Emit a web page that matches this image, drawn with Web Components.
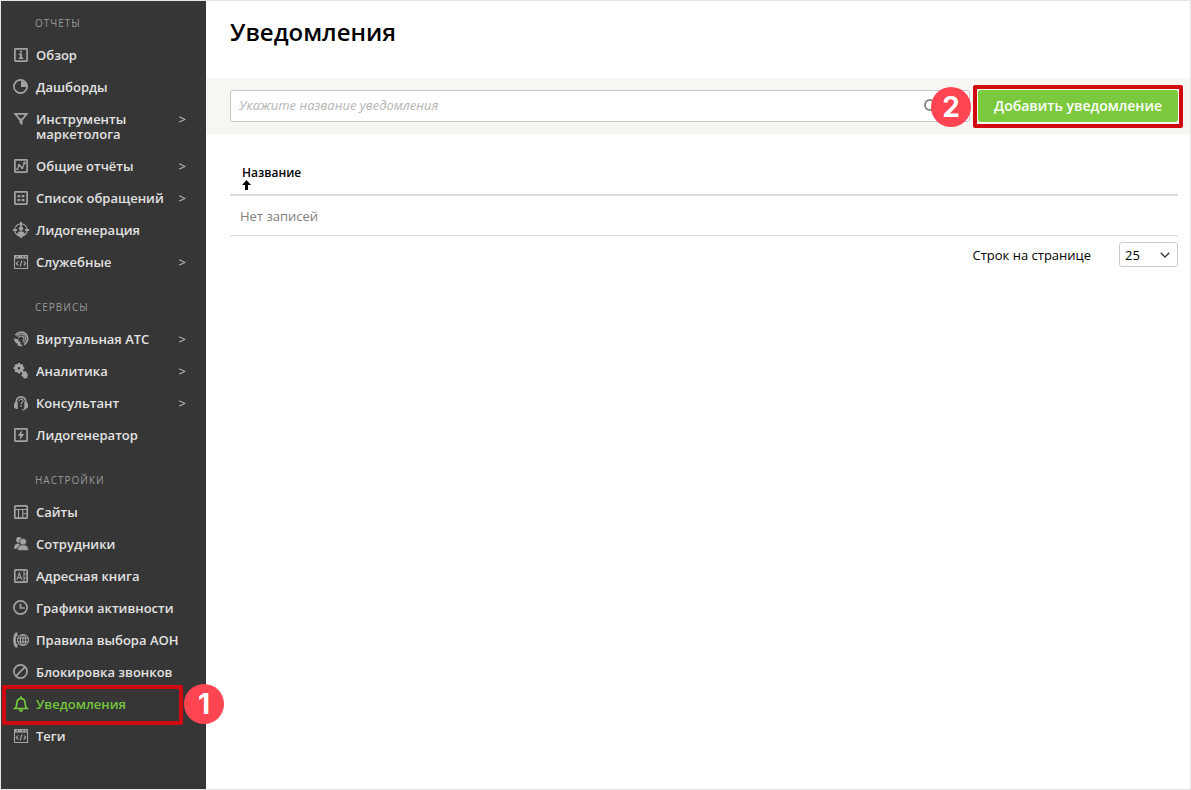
<!DOCTYPE html>
<html lang="ru">
<head>
<meta charset="utf-8">
<meta name="viewport" content="width=device-width, initial-scale=1">
<title>Уведомления</title>
<style>
  html, body { margin: 0; }
  body { font: 13px/15px "Open Sans", "Noto Sans", sans-serif; color: #000; background: #fff; }
</style>
</head>
<body>
<app-shell>
  <side-nav slot="nav">
    <nav-group heading="Отчеты">
      <nav-item icon="info">Обзор</nav-item>
      <nav-item icon="pie">Дашборды</nav-item>
      <nav-item icon="funnel" expandable>Инструменты маркетолога</nav-item>
      <nav-item icon="chart" expandable>Общие отчёты</nav-item>
      <nav-item icon="list" expandable>Список обращений</nav-item>
      <nav-item icon="target">Лидогенерация</nav-item>
      <nav-item icon="code" expandable>Служебные</nav-item>
    </nav-group>
    <nav-group heading="Сервисы">
      <nav-item icon="pbx" expandable>Виртуальная АТС</nav-item>
      <nav-item icon="gears" expandable>Аналитика</nav-item>
      <nav-item icon="headset" expandable>Консультант</nav-item>
      <nav-item icon="bolt">Лидогенератор</nav-item>
    </nav-group>
    <nav-group heading="Настройки">
      <nav-item icon="layout">Сайты</nav-item>
      <nav-item icon="people">Сотрудники</nav-item>
      <nav-item icon="book">Адресная книга</nav-item>
      <nav-item icon="clock">Графики активности</nav-item>
      <nav-item icon="phone">Правила выбора АОН</nav-item>
      <nav-item icon="block">Блокировка звонков</nav-item>
      <nav-item icon="bell" current step="1">Уведомления</nav-item>
      <nav-item icon="code">Теги</nav-item>
    </nav-group>
  </side-nav>
  <page-title>Уведомления</page-title>
  <filter-bar placeholder="Укажите название уведомления">
    <add-button slot="action" step="2">Добавить уведомление</add-button>
  </filter-bar>
  <records-table column="Название">Нет записей</records-table>
  <table-pager>Строк на странице</table-pager>
</app-shell>

<script>
const ICONS = {
  info: '<rect x="1.900" y="1.900" width="12.200" height="12.200" rx=".6" class="s"/><path d="M7 3.800h2v1.700H7zM5.800 6.600H9v4h1.300V12H5.700v-1.400H7V8H5.800z"/>',
  pie: '<circle cx="7.5" cy="7.5" r="6.600" class="s"/><path d="M8 2v6h6A6 6 0 0 0 8 2z"/>',
  funnel: '<path class="s" d="M2.200 2.900h11.600L9.400 8.300H6.600z"/><path d="M6.500 8h3v6.300L6.500 12z"/>',
  chart: '<rect x="1.900" y="1.900" width="12.200" height="12.200" rx=".6" class="s"/><path class="t" d="M4.200 11l2-3.600 3 2.600 2.400-5"/><circle cx="6.200" cy="7.200" r="1.300"/><circle cx="9.200" cy="9.800" r="1.300"/><circle cx="11.500" cy="5" r="1.400"/><circle cx="4.400" cy="11.200" r="1.100"/>',
  list: '<rect x="1.900" y="1.900" width="12.200" height="12.200" rx=".6" class="s"/><path d="M4.600 5h2.600v2.300H4.600zM8.600 5h2.800v2.300H8.600zM4.600 9h2.600v2.300H4.600zM8.600 9h2.800v2.300H8.600z"/>',
  target: '<circle cx="8" cy="8" r="6.300" class="t"/><path d="M7 0h2v4H7zM0 7h4v2H0zM12 7h4v2h-4zM7 13h2v3H7z"/><circle cx="8" cy="6.500" r="2.200"/><path d="M4 13c0-2.600 1.600-3.700 4-3.700s4 1.100 4 3.700a6 6 0 0 1-8 0z"/>',
  code: '<path d="M1 1h14v3.600H1z"/><path d="M3.500 2.200h1.500v1H3.500zM9 2.200h1.500v1H9zM12 2.200h1.500v1H12z" fill="#363636"/><path class="t" d="M1.500 4v10.500h13V4M5.300 7.300L3.300 9.400l2 2.100M10.700 7.300l2 2.100-2 2.100M8.800 6.500l-1.600 6"/>',
  pbx: '<path class="s" d="M2.500 4.200A6.600 6.600 0 1 1 11 13.700M1.800 7.500a6.500 6.500 0 0 0 2 4.300M4.700 13.300a6 6 0 0 0 4.500 1"/><path class="t" d="M4 5.600a4.600 4.600 0 1 1 6.500 6M5.400 7.300a2.800 2.800 0 1 1 4 3"/><path d="M2.500 8h2.300l1 2 2 1.600-1 2.200C4 13.200 2.300 10.800 2.500 8z"/>',
  gears: '<path fill-rule="evenodd" d="M5 0h2l.4 1.500 1.300-.6L10.400 2.300 9.700 3.600l1.600.5v2l-1.600.6.7 1.300L9 9.400l-1.300-.7L7 10.500H5l-.6-1.800-1.400.7L1.600 8l.7-1.300L.5 6V4.100l1.800-.5L1.600 2.300 3 .9l1.400.6zM5.900 3.900a1.300 1.300 0 1 0 0 2.600 1.300 1.300 0 0 0 0-2.600z"/><path d="M9.500 7.800l1.900.7 1.700-.4.5 2 1.600 1.600-.8 1.300.1 2.200-1.800-.1-1.700.9-.8-1.900-1.900-1.400.8-1.800z"/>',
  headset: '<path class="s" d="M3.300 9V6.500a4.700 4.700 0 0 1 9.400 0V9"/><path d="M3 6.500L1 9v3.400L3.500 14.300l1.200-.6V7zM13 6.500L15 9v3.400L12.500 14.300 11.300 13.700V7z"/><path class="t" d="M6.200 6.200a1.900 1.800 0 1 1 2.900 1.300c-.7.500-1 .8-1 1.700M12.500 13c-.5 1.500-2 2-3.500 2"/><path d="M7.400 10.200h1.400v1.500H7.400z"/>',
  bolt: '<rect x="1.900" y="1.900" width="12.200" height="12.200" rx=".6" class="s"/><path d="M9 3L4.700 8.700h2.600L7 13l4.200-6H8.500z"/>',
  layout: '<rect x="1.800" y="1.800" width="12.400" height="12.400" rx="1" class="s"/><path class="t" d="M2 5.500h12M5.500 5.500V14M9.800 5.500V14M9.800 9.700H14"/>',
  people: '<circle cx="6" cy="3.800" r="2.900"/><path d="M1 12.800c0-3.300 1.200-4.800 4-5.300l2 1-3 4.300z"/><circle cx="10" cy="5.700" r="3.500" stroke="#363636" stroke-width=".7"/><path stroke="#363636" stroke-width=".6" d="M4.500 14.400c0-3.200 1.500-5.100 4-5.400h3c2.500.3 4 2.200 4 5.400z"/>',
  book: '<rect x="1.800" y="1.800" width="12.400" height="12.400" rx="1" class="s"/><path class="t" d="M11 2v12M11 6h3M11 10h3M3.900 11.700L6.300 5l2.500 6.700M4.700 9.600H8"/>',
  clock: '<circle cx="7.500" cy="7.500" r="6.600" class="s"/><path class="s" d="M7.500 3.700V8H11.800"/>',
  phone: '<path d="M2.800.2L4.200.5l.5 3.300-1.400.7c-.7 2-.7 5 0 7l1.400.8-.5 3.200-1.400.3C-.7 12-.7 4 2.800.2z"/><circle cx="10" cy="8" r="5.500" class="t"/><ellipse cx="10" cy="8" rx="2.600" ry="5.500" class="t"/><path class="t" d="M10 2.500v11M5 6.200h10M5 9.800h10"/>',
  block: '<circle cx="7.500" cy="7.500" r="6.600" class="s"/><path class="s" d="M3.200 11.800l8.600-8.600"/>',
  bell: '<path class="s" d="M2 12.500h12c-1.500-1.100-1.900-2.300-1.900-5.200 0-3-1.500-4.700-4.100-4.700S3.900 4.300 3.900 7.300c0 2.900-.4 4.100-1.900 5.200z"/><path d="M7.100.3h1.800v2H7.100zM5.700 13.400h4.600c-.3 1.600-1 2.400-2.300 2.400s-2-.8-2.300-2.400z"/>'
};

function define(name, html, setup) {
  const template = document.createElement('template');
  template.innerHTML = html;
  customElements.define(name, class extends HTMLElement {
    constructor() {
      super();
      this.attachShadow({ mode: 'open' }).append(template.content.cloneNode(true));
    }
    connectedCallback() { if (setup) setup(this, this.shadowRoot); }
  });
}

define('app-shell', `
  <style>
    :host { display: grid; grid-template-columns: 205px minmax(0, 1fr); box-sizing: border-box; min-height: 100vh; border: 1px solid #e6e6e6; }
    main { padding-top: 15px; }
  </style>
  <slot name="nav"></slot>
  <main><slot></slot></main>`);

define('side-nav', `
  <style>
    :host { display: block; background: #363636; color: #e2e2e2; }
    nav { display: flex; flex-direction: column; gap: 21px; padding: 14px 0 32px; }
  </style>
  <nav aria-label="Основное меню"><slot></slot></nav>`);

define('nav-group', `
  <style>
    :host { display: block; }
    h2 { margin: 0 0 8px; padding-left: 34px; font-size: 10px; line-height: 16px; font-weight: 400; letter-spacing: 1px; text-transform: uppercase; color: #999; }
  </style>
  <section><h2></h2><slot></slot></section>`,
  (el, root) => { root.querySelector('h2').textContent = el.getAttribute('heading'); });

define('step-badge', `
  <style>
    :host { display: grid; place-items: center; width: 40px; height: 40px; border-radius: 50%; background: #ff4552; color: #fff; font: 700 28px/40px Inter, sans-serif; }
  </style>
  <slot></slot>`);

define('nav-item', `
  <style>
    :host { display: block; position: relative; }
    a { display: flex; align-items: flex-start; gap: 7px; padding: 9px 20px 8px 12px; color: inherit; font-weight: 600; text-decoration: none; }
    :host([current]) a { color: #74c63c; }
    svg { flex: none; width: 16px; height: 16px; margin-top: -1px; fill: #a3a3a3; color: #a3a3a3; }
    :host([current]) svg { fill: #74c63c; color: #74c63c; }
    .s { fill: none; stroke: currentColor; stroke-width: 1.7; }
    .t { fill: none; stroke: currentColor; stroke-width: 1.1; }
    .label { flex: 1; min-width: 0; }
    .more { flex: none; font-weight: 400; color: #c6c6c6; }
    .frame { position: absolute; inset: -3px 23px -5px 1px; border: 4px solid #d00a10; border-radius: 2px; box-sizing: border-box; pointer-events: none; }
    step-badge { position: absolute; left: 183px; top: -4px; z-index: 1; }
  </style>
  <a href="#"><svg viewBox="0 0 16 16" aria-hidden="true"></svg><span class="label"><slot></slot></span></a>`,
  (el, root) => {
    root.querySelector('svg').innerHTML = ICONS[el.getAttribute('icon')];
    const link = root.querySelector('a');
    if (el.hasAttribute('current')) link.setAttribute('aria-current', 'page');
    if (el.hasAttribute('expandable')) link.insertAdjacentHTML('beforeend', '<span class="more">&gt;</span>');
    if (el.hasAttribute('step')) link.insertAdjacentHTML('afterend', '<span class="frame"></span><step-badge>' + el.getAttribute('step') + '</step-badge>');
  });

define('page-title', `
  <style>
    :host { display: block; padding: 0 24px 30px; }
    h1 { margin: 0; font-size: 24px; line-height: 32px; font-weight: 600; }
  </style>
  <h1><slot></slot></h1>`);

define('filter-bar', `
  <style>
    :host { display: flex; gap: 8px; padding: 12px; padding-left: 24px; background: #f7f6f2; }
    label { flex: 1; display: flex; align-items: center; box-sizing: border-box; height: 32px; padding: 0 32px 0 8px; background: #fff; border: 1px solid #c8c8cc; border-radius: 3px; }
    input { flex: 1; min-width: 0; padding: 0 0 2px; border: 0; outline: 0; background: none; font: inherit; color: #000; }
    input::placeholder { color: #b5b5b5; font-style: italic; opacity: 1; }
    svg { flex: none; width: 14px; height: 14px; fill: none; stroke: #888; stroke-width: 2; }
  </style>
  <label><input type="text"><svg viewBox="0 0 14 14" aria-hidden="true"><circle cx="7" cy="6" r="5"/><path d="M10.500 9.500L14 13"/></svg></label>
  <slot name="action"></slot>`,
  (el, root) => {
    const input = root.querySelector('input');
    input.placeholder = el.getAttribute('placeholder');
    input.setAttribute('aria-label', input.placeholder);
  });

define('add-button', `
  <style>
    :host { display: block; position: relative; }
    button { display: block; height: 32px; padding: 0 16px 2px; border: 0; border-radius: 3px; background: #7bc93c; color: #fff; font: inherit; font-size: 14px; font-weight: 600; cursor: pointer; }
    .frame { position: absolute; inset: -5px -5px -6px; border: 4px solid #d00a10; border-radius: 2px; pointer-events: none; }
    step-badge { position: absolute; right: calc(100% + 7px); top: -3px; }
  </style>
  <button type="button"><slot></slot></button><span class="frame"></span><step-badge></step-badge>`,
  (el, root) => { root.querySelector('step-badge').textContent = el.getAttribute('step'); });

define('records-table', `
  <style>
    :host { display: block; padding: 28px 12px 0 24px; }
    table { width: 100%; border-collapse: separate; border-spacing: 0; }
    th { padding: 4px 12px 3px; border-bottom: 2px solid #dcdcdc; text-align: left; font-size: 12px; line-height: 14px; font-weight: 600; }
    svg { display: block; width: 10px; height: 11px; }
    td { padding: 13px 10px 11px; border-bottom: 1px solid #dcdcdc; color: #808080; }
  </style>
  <table>
    <thead><tr><th scope="col" aria-sort="ascending"><span></span><svg viewBox="0 0 10 11" aria-hidden="true"><path d="M4.500 0L9 5H6v5H3V5H0z"/></svg></th></tr></thead>
    <tbody><tr><td><slot></slot></td></tr></tbody>
  </table>`,
  (el, root) => { root.querySelector('th span').textContent = el.getAttribute('column'); });

define('table-pager', `
  <style>
    :host { display: block; padding: 6px 12px 0 24px; }
    div { display: flex; justify-content: flex-end; align-items: center; gap: 28px; }
    label { padding-top: 2px; }
    .box { display: grid; align-items: center; }
    select, svg { grid-area: 1 / 1; }
    select { appearance: none; box-sizing: border-box; width: 59px; height: 25px; padding: 2px 5px 0; border: 1px solid #c8cacc; border-radius: 3px; background: #fff; color: #000; font: inherit; }
    svg { justify-self: end; width: 10px; height: 6px; margin-right: 8px; fill: none; stroke: #333; stroke-width: 1.300; pointer-events: none; }
  </style>
  <div><label for="rows"><slot></slot></label>
    <span class="box"><select id="rows"><option>25</option><option>50</option><option>100</option></select>
    <svg viewBox="0 0 10 6" aria-hidden="true"><path d="M.8.8L5 5 9.200.8"/></svg></span></div>`);
</script>
</body>
</html>
